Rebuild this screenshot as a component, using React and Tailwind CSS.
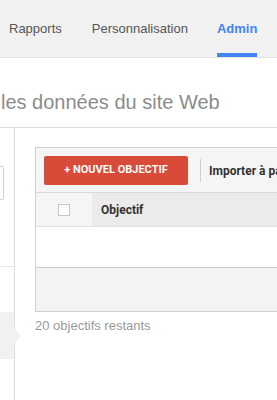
export default function App() {
  return (
    <div className="w-[277px] h-[400px] overflow-hidden bg-white font-['Liberation_Sans',Arial,sans-serif]">
      {/* Top nav */}
      <div className="h-[58px] bg-[#f1f1f1] border-b border-[#e2e2e2] flex items-stretch text-[13px] text-[#555]">
        <div className="pl-[9px] flex items-center">Rapports</div>
        <div className="pl-[30px] flex items-center">Personnalisation</div>
        <div className="ml-[29px] flex flex-col justify-center relative">
          <span className="font-bold text-[#4285f4]">Admin</span>
          <span className="absolute left-0 right-0 bottom-0 h-[4px] bg-[#4285f4]"></span>
        </div>
      </div>
      {/* Title */}
      <div className="h-[70px] border-b border-[#dcdcdc] flex items-center pl-[1px] pt-[19px]">
        <span className="text-[20px] text-[#8c8c8c] whitespace-nowrap">les données du site Web</span>
      </div>
      {/* Body */}
      <div className="flex h-[272px]">
        {/* left column */}
        <div className="w-[15px] shrink-0 border-r border-[#dcdcdc] flex flex-col relative">
          <div className="h-[38px]"></div>
          <div className="h-[34px] w-[4px] border border-l-0 border-[#cfcfcf] rounded-r-[2px] bg-white"></div>
          <div className="h-[67px] border-b border-[#e6e6e6]"></div>
          <div className="h-[45px]"></div>
          <div className="h-[47px] bg-[#f1f1f1] relative">
            <span className="absolute left-[14px] top-[15px] w-0 h-0 border-y-[9px] border-y-transparent border-l-[7px] border-l-[#f1f1f1]"></span>
          </div>
        </div>
        {/* content */}
        <div className="pl-[20px] pt-[19px] flex flex-col">
          <div className="w-[300px] border border-[#d0d0d0] border-r-0">
            {/* toolbar */}
            <div className="h-[45px] bg-[#f5f5f5] border-b border-[#d9d9d9] flex items-center pl-[8px] pt-[1px] font-['Roboto',sans-serif] overflow-hidden">
              <div className="shrink-0 w-[144px] h-[29px] bg-[#d84b38] rounded-[2px] flex items-center justify-center text-white text-[11px] font-bold">
                + NOUVEL OBJECTIF
              </div>
              <div className="shrink-0 ml-[12px] w-px h-[23px] bg-[#d0d0d0]"></div>
              <div className="shrink-0 ml-[8px] text-[12px] font-bold text-[#333] whitespace-nowrap">Importer à partir</div>
            </div>
            {/* header row */}
            <div className="h-[33px] flex font-['Roboto',sans-serif]">
              <div className="w-[56px] bg-[#f5f5f5] flex items-center justify-center">
                <span className="w-[12px] h-[12px] border border-[#c6c6c6] bg-white"></span>
              </div>
              <div className="flex-1 bg-[#ebebeb] flex items-center pl-[9px] text-[12px] font-bold text-[#333]">Objectif</div>
            </div>
            <div className="h-[41px] bg-white border-t border-[#e2e2e2]"></div>
            <div className="h-[44px] bg-[#f3f3f3] border-t border-[#cfcfcf]"></div>
          </div>
          <div className="mt-[4px] text-[13px] text-[#9a9a9a]">20 objectifs restants</div>
        </div>
      </div>
    </div>
  );
}
